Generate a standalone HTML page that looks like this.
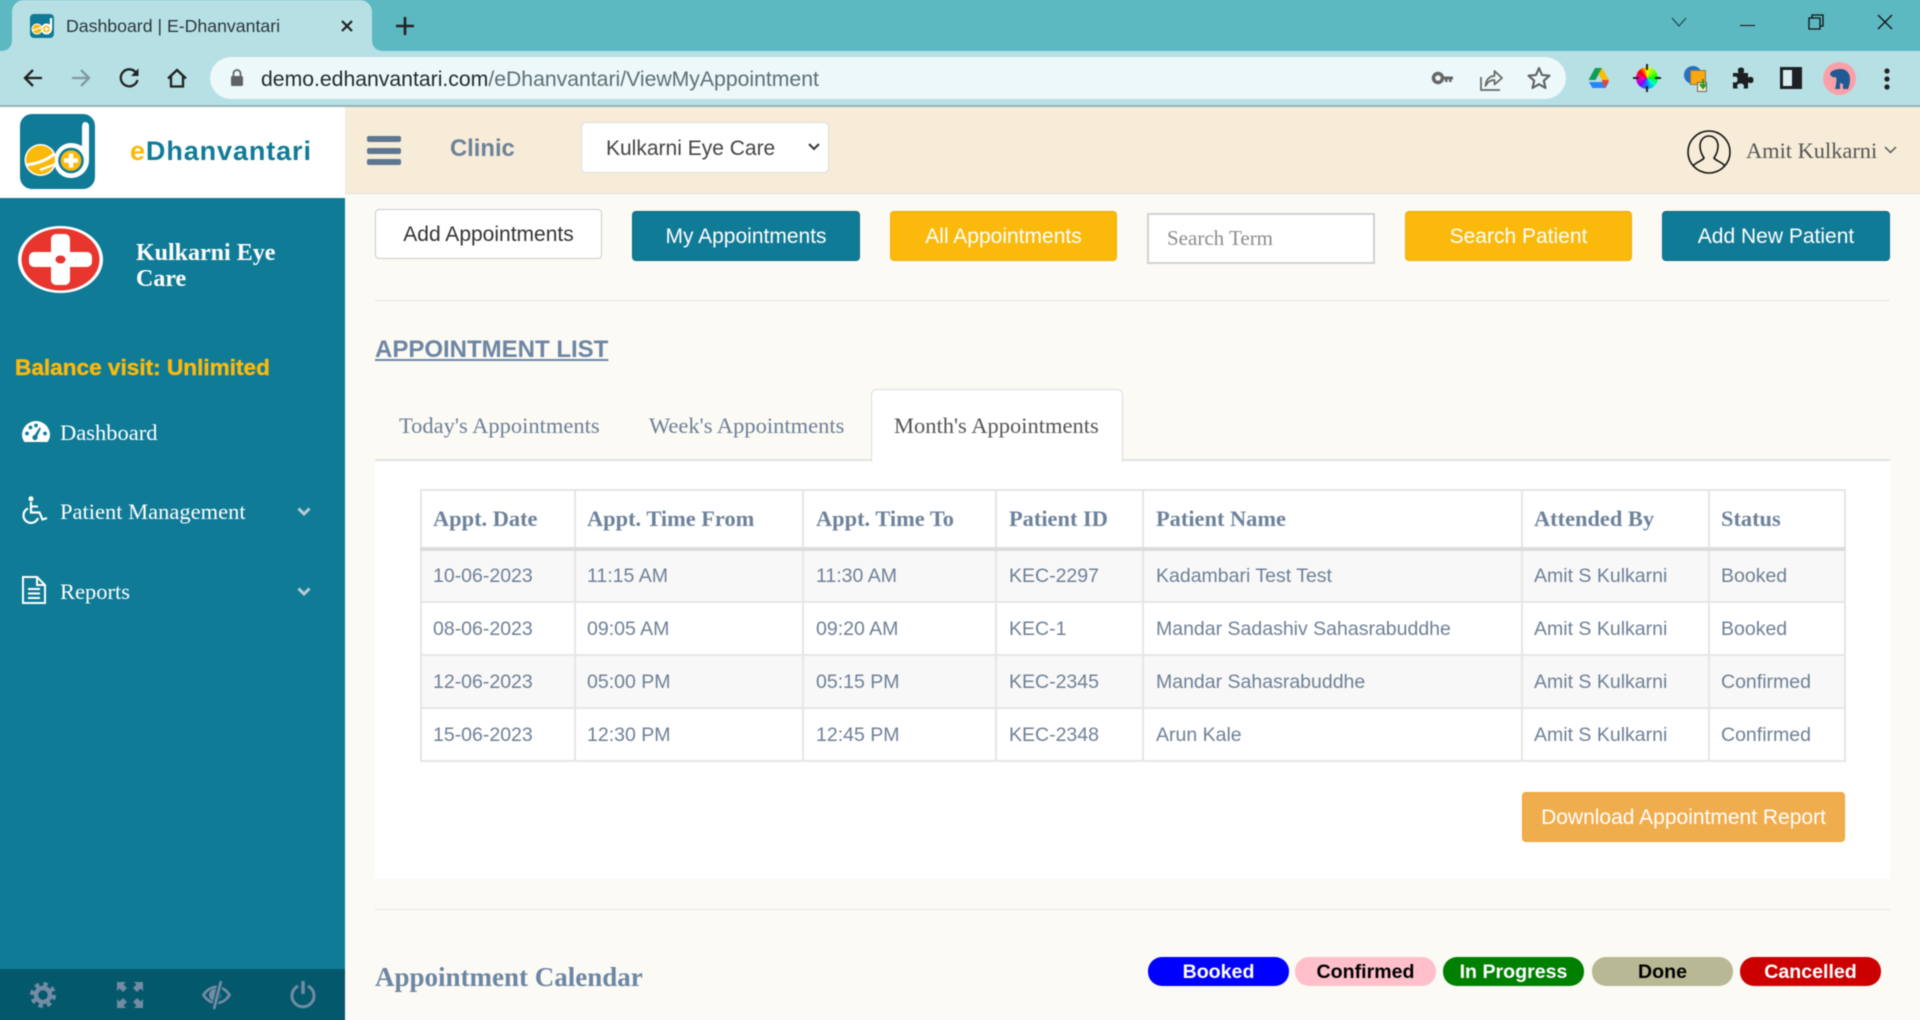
<!DOCTYPE html>
<html lang="en">
<head>
<meta charset="utf-8">
<title>Dashboard | E-Dhanvantari</title>
<style>
html,body{margin:0;padding:0;width:1920px;height:1020px;overflow:hidden;background:#fbfaf5;font-family:"Liberation Sans",sans-serif}
#w{position:absolute;left:0;top:0;width:1920px;height:1020px;overflow:hidden;contain:strict}
#r{position:absolute;left:-10px;top:-10px;width:1940px;height:1040px;overflow:hidden;filter:blur(.4px);background:#fbfaf5}
#i{position:absolute;left:10px;top:10px;width:1920px;height:1020px}
.a{position:absolute;white-space:nowrap;box-sizing:border-box}
.s{font-family:"Liberation Serif",serif}
svg{position:absolute;overflow:visible}
.btn{height:50px;line-height:50px;text-align:center;font-size:21px;color:#fff;border-radius:4px;border:1px solid}
.teal{background:#107b96;border-color:#0e6a82;border-top-color:#0c5f76}
.yel{background:#fbb90c;border-color:#f0b00c;border-top-color:#e3a70b}
.pill{top:957px;height:29px;line-height:31px;width:141px;border-radius:14px;text-align:center;font-weight:bold;font-size:19.6px}
.nav{font-family:"Liberation Serif",serif;font-size:22.5px;color:#fff;left:60px;line-height:26px}
table{position:absolute;left:420px;top:489px;width:1424px;border-collapse:collapse;table-layout:fixed;background:#fff}
th,td{border:2px solid #e6e6e6;padding:0 0 0 11px;text-align:left;box-sizing:border-box;white-space:nowrap}
th:nth-child(n+3):nth-child(-n+5),td:nth-child(n+3):nth-child(-n+5){padding-left:12px}
th{font-family:"Liberation Serif",serif;font-size:22.4px;font-weight:bold;color:#6d829b;height:59px;border-bottom:4px solid #dcdcdc}
td{font-size:19.5px;color:#6f8096;height:53px}
tr:nth-child(n+3) td{padding-top:1px}
tr.o td{background:#f8f8f8}
</style>
</head>
<body>
<div id="w"><div id="r"><div id="i">
<!-- browser chrome -->
<div class="a" style="left:-10px;top:-10px;width:1940px;height:61px;background:#5cb8c1"></div>
<div class="a" style="left:-10px;top:51px;width:1940px;height:54px;background:#b7e0e5"></div>
<div class="a" style="left:-10px;top:105px;width:1940px;height:2px;background:#94b6ba"></div>
<div class="a" style="left:12px;top:0;width:360px;height:51px;background:#b7e0e5;border-radius:12px 12px 0 0"></div>
<svg style="left:0;top:39px" width="12" height="12"><path d="M0 12C8 12 12 8 12 0V12Z" fill="#b7e0e5"/></svg>
<svg style="left:372px;top:39px" width="12" height="12"><path d="M12 12C4 12 0 8 0 0V12Z" fill="#b7e0e5"/></svg>
<svg style="left:30px;top:14px" width="24" height="24" viewBox="0 0 24 24"><rect width="24" height="24" rx="4" fill="#107b96"/><circle cx="16.500" cy="15" r="5.500" fill="#fff"/><circle cx="16.500" cy="15" r="3.500" fill="#fbb90c"/><path d="M21 4V15" stroke="#fff" stroke-width="2.300"/><path d="M16.500 12.500v5M14 15h5" stroke="#fff" stroke-width="1.300"/><circle cx="7" cy="15" r="5" fill="#fbb90c" stroke="#fff"/><path d="M2.500 16.500L11 13.500" stroke="#fff" stroke-width="1.200"/></svg>
<div class="a" style="left:66px;top:14px;line-height:24px;font-size:17.700px;color:#28383b">Dashboard | E-Dhanvantari</div>
<svg style="left:340px;top:19px" width="14" height="14"><path d="M2 2L12 12M12 2L2 12" stroke="#222" stroke-width="2.200"/></svg>
<svg style="left:396px;top:17px" width="18" height="18"><path d="M9 0V18M0 9H18" stroke="#222" stroke-width="2.600"/></svg>
<svg style="left:1671px;top:17px" width="16" height="10"><path d="M1 1L8 9L15 1" fill="none" stroke="#23474c" stroke-width="1.200"/></svg>
<div class="a" style="left:1740px;top:25px;width:15px;height:1px;background:#111"></div>
<svg style="left:1808px;top:14px" width="16" height="16"><path d="M4 4V1H15V12H12M1 4H12V15H1Z" fill="none" stroke="#111" stroke-width="1.300"/></svg>
<svg style="left:1877px;top:14px" width="16" height="16"><path d="M1 1L15 15M15 1L1 15" stroke="#111" stroke-width="1.300"/></svg>

<svg style="left:22px;top:67px" width="22" height="22"><path d="M20 11H3M11 3L3 11L11 19" fill="none" stroke="#222" stroke-width="2.300"/></svg>
<svg style="left:70px;top:67px" width="22" height="22"><path d="M2 11H19M11 3L19 11L11 19" fill="none" stroke="#7f9a9e" stroke-width="2.300"/></svg>
<svg style="left:118.500px;top:67px" width="22" height="22"><path d="M18.500 13A8.500 8.500 0 1 1 16.500 5" fill="none" stroke="#222" stroke-width="2.300"/><path d="M19.500 1.500V9H12Z" fill="#222"/></svg>
<svg style="left:166px;top:67px" width="22" height="22"><path d="M2 11.500L11 3L20 11.500M5 9.500V19.500H17V9.500" fill="none" stroke="#222" stroke-width="2.300"/></svg>
<div class="a" style="left:210px;top:57px;width:1356px;height:42px;background:#ecf8f9;border-radius:21px"></div>
<svg style="left:230px;top:68px" width="14" height="20"><path d="M3.500 8V5.500a3.500 3.500 0 0 1 7 0V8" fill="none" stroke="#5f6368" stroke-width="1.700"/><rect x="1" y="8" width="12" height="10" rx="1.500" fill="#5f6368"/></svg>
<div class="a" style="left:261px;top:67px;line-height:26px;font-size:21.200px;color:#1f2a2c">demo.edhanvantari.com<span style="color:#5c7074">/eDhanvantari/ViewMyAppointment</span></div>
<svg style="left:1431px;top:70px" width="24" height="16"><circle cx="7" cy="8" r="4.500" fill="none" stroke="#666" stroke-width="3.500"/><path d="M12 6.500H22V9.500H20.500V12H18V9.500H16.500V12H14V9.500H12Z" fill="#666"/></svg>
<svg style="left:1480px;top:66px" width="24" height="26"><path d="M1 11V24H20" fill="none" stroke="#666" stroke-width="1.700"/><path d="M5.500 20C6 13 10 10 14.500 10V5L22 12L14.500 18.500V14C10 14 7.500 16 5.500 20Z" fill="none" stroke="#666" stroke-width="1.700" stroke-linejoin="round"/></svg>
<svg style="left:1527px;top:66px" width="24" height="24" viewBox="0 0 24 24"><path d="M12 2L15 9L22.500 9.700L16.800 14.700L18.500 22L12 18.200L5.500 22L7.200 14.700L1.500 9.700L9 9Z" fill="none" stroke="#5f6368" stroke-width="2.100" stroke-linejoin="round"/></svg>
<svg style="left:1587px;top:67px" width="23" height="22" viewBox="0 0 23 22"><path d="M8 1H15L8.500 13H1.500Z" fill="#0f9d58"/><path d="M15 1L22 13H15L11.500 7Z" fill="#fbbc04"/><path d="M6 15H22L18.500 21H5.500L2 15Z" fill="#2684fc"/><path d="M15 13H22L18.500 21L15.500 16Z" fill="#ea4335"/></svg>
<div class="a" style="left:1636px;top:67px;width:22px;height:22px;border-radius:50%;background:conic-gradient(#ff0 0deg,#7f0 45deg,#0f0 90deg,#0fc 130deg,#08f 180deg,#80f 225deg,#f0a 270deg,#f00 315deg,#ff0 360deg)"></div>
<div class="a" style="left:1646px;top:64px;width:2px;height:6px;background:#222"></div>
<div class="a" style="left:1646px;top:86px;width:2px;height:6px;background:#222"></div>
<div class="a" style="left:1633px;top:77px;width:6px;height:2px;background:#222"></div>
<div class="a" style="left:1655px;top:77px;width:6px;height:2px;background:#222"></div>
<div class="a" style="left:1684px;top:66px;width:18px;height:18px;border-radius:50%;background:#2a6fc0"></div>
<div class="a" style="left:1690px;top:70px;width:16px;height:15px;background:#fba70f;border:1px solid #8a7a55"></div>
<div class="a" style="left:1697px;top:82px;width:10px;height:10px;background:#f3eccf;border:1px solid #666"></div>
<svg style="left:1699px;top:79px" width="8" height="11"><path d="M4 0V7M1 5L4 9L7 5" fill="none" stroke="#2b9a16" stroke-width="2"/></svg>
<svg style="left:1732px;top:67px" width="22" height="22" viewBox="0 0 22 22"><path d="M1 6H6.500C5 2 6.500 0.500 9 0.500S13 2 11.500 6H16V10.500C20 9 21.500 10.500 21.500 13S20 17 16 15.500V21.500H11.500C13 18 11 16.500 8.500 16.500S4 18 6 21.500H1V15C4.500 16.500 5.500 14.500 5.500 12.500S4.500 8.500 1 10Z" fill="#1c1e21"/></svg>
<div class="a" style="left:1780px;top:67px;width:22px;height:22px;border:3px solid #1e2124;border-right:10px solid #1e2124;background:#d8eef0"></div>
<div class="a" style="left:1823px;top:62px;width:33px;height:33px;border-radius:50%;background:#fba0a8"></div>
<svg style="left:1829px;top:68px" width="22" height="22" viewBox="0 0 22 22"><path d="M1 6C2 2 8 1 12 1C17 1 21 5 21 11C21 15 20 19 19 21H14V16L11 15V21H6C7 17 8 12 7 9C5 10 2 9 1 6Z" fill="#1f5a92"/></svg>
<svg style="left:1883px;top:67px" width="8" height="24"><circle cx="4" cy="4" r="2.600" fill="#222"/><circle cx="4" cy="12" r="2.600" fill="#222"/><circle cx="4" cy="20" r="2.600" fill="#222"/></svg>

<!-- header -->
<div class="a" style="left:-10px;top:107px;width:355px;height:91px;background:#fff"></div>
<div class="a" style="left:345px;top:107px;width:1585px;height:87px;background:#f7ecd8;border-bottom:1px solid #e2e0da"></div>
<svg style="left:20px;top:114px" width="75" height="75" viewBox="0 0 75 75"><rect width="75" height="75" rx="12" fill="#107b96"/><path d="M65 8C67.500 8 69 10 69 12V46C69 56 61 64 51 64C41 64 34 56 34 46.500C34 37 42 29 51 29C55 29 58 30 62 32V14C62 10 63 8 65 8Z" fill="#fff"/><circle cx="51" cy="46.500" r="12.800" fill="#107b96"/><circle cx="51" cy="46.500" r="10.300" fill="#fbb90c"/><path d="M51 39.500V53.500M44 46.500H58" stroke="#fff" stroke-width="4.500"/><circle cx="20.500" cy="46" r="16" fill="#fff"/><circle cx="20.500" cy="46" r="14.500" fill="#fbb90c"/><path d="M6 51C14 50 26 47 34 40" fill="none" stroke="#fff" stroke-width="3"/><path d="M20 56L36 50" stroke="#fff" stroke-width="2.500"/></svg>
<div class="a" style="left:130px;top:135px;line-height:32px;font-size:27px;font-weight:bold;letter-spacing:.9px;color:#107b96"><span style="color:#fbb90c">e</span>Dhanvantari</div>
<div class="a" style="left:367px;top:136px;width:34px;height:6px;background:#5f7690;border-radius:2px"></div>
<div class="a" style="left:367px;top:148px;width:34px;height:6px;background:#5f7690;border-radius:2px"></div>
<div class="a" style="left:367px;top:159px;width:34px;height:6px;background:#5f7690;border-radius:2px"></div>
<div class="a" style="left:450px;top:135px;line-height:28px;font-size:23.800px;font-weight:bold;color:#6d8199">Clinic</div>
<div class="a" style="left:581px;top:122px;width:248px;height:51px;background:#fff;border:1px solid #ddd;border-radius:5px"></div>
<div class="a" style="left:606px;top:136px;line-height:26px;font-size:21px;color:#444">Kulkarni Eye Care</div>
<svg style="left:808px;top:143px" width="12" height="8"><path d="M1 1L6 6L11 1" fill="none" stroke="#333" stroke-width="2"/></svg>
<svg style="left:1687px;top:130px" width="44" height="44" viewBox="0 0 44 44"><circle cx="22" cy="22" r="21" fill="none" stroke="#111" stroke-width="1.600"/><path d="M6 36C9 32 15 31 17 28C15 25 13 21 13 16C13 10 17 6 22 6C27 6 31 10 31 16C31 21 29 25 27 28C29 31 35 32 38 36" fill="none" stroke="#111" stroke-width="1.600"/></svg>
<div class="a s" style="left:1746px;top:138px;line-height:26px;font-size:22.400px;color:#555">Amit Kulkarni</div>
<svg style="left:1884px;top:146px" width="13" height="8"><path d="M1 1L6.500 6.500L12 1" fill="none" stroke="#555" stroke-width="1.500"/></svg>

<!-- sidebar -->
<div class="a" style="left:-10px;top:198px;width:355px;height:771px;background:#107b96"></div>
<div class="a" style="left:-10px;top:969px;width:355px;height:61px;background:#04586c"></div>
<svg style="left:18px;top:226px" width="85" height="67" viewBox="0 0 85 67"><ellipse cx="42.500" cy="33.500" rx="42.500" ry="33.500" fill="#fff"/><ellipse cx="42.500" cy="33.500" rx="39" ry="31" fill="#e8352e"/><rect x="11" y="26" width="63" height="15" rx="5" fill="#fff"/><rect x="33" y="8" width="19" height="51" rx="5" fill="#fff"/><ellipse cx="42.500" cy="33.500" rx="5" ry="4" fill="#e8352e"/></svg>
<div class="a s" style="left:136px;top:240px;font-size:24px;font-weight:bold;line-height:26px;color:#fff;white-space:normal;width:190px">Kulkarni Eye<br>Care</div>
<div class="a" style="left:15px;top:355px;line-height:26px;font-size:22.600px;font-weight:bold;color:#fbb90c;-webkit-text-stroke:.4px #fbb90c">Balance visit: Unlimited</div>

<svg style="left:22px;top:421px" width="28" height="21" viewBox="0 0 28 21"><path d="M2.500 21C0.800 18.500 0 16.500 0 14A14 14 0 0 1 28 14C28 16.500 27.200 18.500 25.500 21Z" fill="#fff"/><g fill="#107b96"><circle cx="5" cy="12.500" r="1.900"/><circle cx="8.500" cy="6.500" r="1.900"/><circle cx="14" cy="4.500" r="1.900"/><circle cx="23" cy="12.500" r="1.900"/><circle cx="13" cy="16.500" r="2.600"/><path d="M12 15L17.500 6.500L19 7.200L15 16Z"/></g></svg>
<div class="a nav" style="top:420px">Dashboard</div>
<svg style="left:22px;top:496px" width="26" height="28" viewBox="0 0 26 28"><circle cx="9" cy="2.800" r="2.500" fill="#fff"/><path d="M9 6V16.500H17.500L20.500 23.500L25 22" fill="none" stroke="#fff" stroke-width="2.200"/><path d="M9 10.500H16" stroke="#fff" stroke-width="2"/><path d="M6 12.500A7.500 7.500 0 1 0 16 22" fill="none" stroke="#fff" stroke-width="2.200"/></svg>
<div class="a nav" style="top:499px">Patient Management</div>
<svg style="left:297px;top:507px" width="14" height="10"><path d="M1.500 1.500L7 7L12.500 1.500" fill="none" stroke="#b6ccd5" stroke-width="3"/></svg>
<svg style="left:22px;top:576px" width="24" height="28" viewBox="0 0 24 28"><path d="M1 1H15L23 9V27H1Z" fill="none" stroke="#fff" stroke-width="2"/><path d="M15 1V9H23" fill="none" stroke="#fff" stroke-width="2"/><path d="M6 13H18M6 17.500H18M6 22H18" stroke="#fff" stroke-width="2"/></svg>
<div class="a nav" style="top:579px">Reports</div>
<svg style="left:297px;top:587px" width="14" height="10"><path d="M1.500 1.500L7 7L12.500 1.500" fill="none" stroke="#b6ccd5" stroke-width="3"/></svg>

<svg style="left:30px;top:982px" width="26" height="26" viewBox="0 0 26 26"><circle cx="13" cy="13" r="10.500" fill="none" stroke="#738ba3" stroke-width="5" stroke-dasharray="4.200 4.050"/><circle cx="13" cy="13" r="7" fill="none" stroke="#738ba3" stroke-width="4.500"/></svg>
<svg style="left:117px;top:982px" width="26" height="26" viewBox="0 0 26 26" fill="#738ba3"><path d="M0 0H9L6.500 2.500L10 6L6 10L2.500 6.500L0 9Z"/><path d="M26 0H17L19.500 2.500L16 6L20 10L23.500 6.500L26 9Z"/><path d="M0 26H9L6.500 23.500L10 20L6 16L2.500 19.500L0 17Z"/><path d="M26 26H17L19.500 23.500L16 20L20 16L23.500 19.500L26 17Z"/></svg>
<svg style="left:202px;top:981px" width="29" height="28" viewBox="0 0 29 28"><path d="M1.500 14C5 8.500 10 6 14.500 6C19 6 24 8.500 27.500 14C24 19.500 19 22 14.500 22C10 22 5 19.500 1.500 14Z" fill="none" stroke="#738ba3" stroke-width="2.800"/><circle cx="13" cy="14" r="6" fill="#738ba3"/><path d="M19 0L12 28" stroke="#04586c" stroke-width="5.500"/><path d="M19 0L12 28" stroke="#738ba3" stroke-width="2.800"/></svg>
<svg style="left:290px;top:981px" width="26" height="28" viewBox="0 0 26 28"><path d="M8 5A11 11 0 1 0 18 5" fill="none" stroke="#738ba3" stroke-width="3"/><path d="M13 0V13" stroke="#738ba3" stroke-width="3.500"/></svg>

<!-- action row -->
<div class="a btn" style="left:375px;top:209px;width:227px;background:#fff;border-color:#ccc;color:#333">Add Appointments</div>
<div class="a btn teal" style="left:632px;top:211px;width:228px">My Appointments</div>
<div class="a btn yel" style="left:890px;top:211px;width:227px">All Appointments</div>
<div class="a s" style="left:1147px;top:213px;width:228px;height:51px;background:#fff;border:2px solid #d2d2d2;padding-left:18px;line-height:47px;font-size:21px;color:#8d8d8d">Search Term</div>
<div class="a btn yel" style="left:1405px;top:211px;width:227px">Search Patient</div>
<div class="a btn teal" style="left:1662px;top:211px;width:228px">Add New Patient</div>
<div class="a" style="left:375px;top:300px;width:1515px;height:1px;background:#e6e5e1"></div>

<div class="a" style="left:375px;top:335px;line-height:30px;font-size:24px;font-weight:bold;color:#6d86a3;text-decoration:underline">APPOINTMENT LIST</div>

<!-- tabs -->
<div class="a" style="left:375px;top:460px;width:1515px;height:419px;background:#fff"></div>
<div class="a" style="left:375px;top:459px;width:1515px;height:2px;background:#e2e2df"></div>
<div class="a" style="left:871px;top:389px;width:252px;height:73px;background:#fff;border:1px solid #ddd;border-bottom:0;border-radius:6px 6px 0 0"></div>
<div class="a s" style="left:399px;top:412px;line-height:27px;font-size:22.500px;color:#6d7f95">Today's Appointments</div>
<div class="a s" style="left:649px;top:412px;line-height:27px;font-size:22.500px;color:#6d7f95">Week's Appointments</div>
<div class="a s" style="left:894px;top:412px;line-height:27px;font-size:22.500px;color:#555">Month's Appointments</div>

<!-- table -->
<table>
<colgroup><col style="width:154px"><col style="width:228px"><col style="width:193px"><col style="width:147px"><col style="width:379px"><col style="width:187px"><col style="width:136px"></colgroup>
<tr><th>Appt. Date</th><th>Appt. Time From</th><th>Appt. Time To</th><th>Patient ID</th><th>Patient Name</th><th>Attended By</th><th>Status</th></tr>
<tr class="o"><td>10-06-2023</td><td>11:15 AM</td><td>11:30 AM</td><td>KEC-2297</td><td>Kadambari Test Test</td><td>Amit S Kulkarni</td><td>Booked</td></tr>
<tr><td>08-06-2023</td><td>09:05 AM</td><td>09:20 AM</td><td>KEC-1</td><td>Mandar Sadashiv Sahasrabuddhe</td><td>Amit S Kulkarni</td><td>Booked</td></tr>
<tr class="o"><td>12-06-2023</td><td>05:00 PM</td><td>05:15 PM</td><td>KEC-2345</td><td>Mandar Sahasrabuddhe</td><td>Amit S Kulkarni</td><td>Confirmed</td></tr>
<tr><td>15-06-2023</td><td>12:30 PM</td><td>12:45 PM</td><td>KEC-2348</td><td>Arun Kale</td><td>Amit S Kulkarni</td><td>Confirmed</td></tr>
</table>

<div class="a btn" style="left:1522px;top:792px;width:323px;height:50px;background:#f0ad4e;border-color:#eea236">Download Appointment Report</div>
<div class="a" style="left:375px;top:909px;width:1515px;height:1px;background:#e6e5e1"></div>

<div class="a s" style="left:375px;top:962px;line-height:30px;font-size:27px;font-weight:bold;color:#6d86a3">Appointment Calendar</div>
<div class="a pill" style="left:1148px;background:#00f;color:#fff">Booked</div>
<div class="a pill" style="left:1295px;background:#ffc0cb;color:#000">Confirmed</div>
<div class="a pill" style="left:1443px;background:#008000;color:#fff">In Progress</div>
<div class="a pill" style="left:1592px;background:#b8b894;color:#000">Done</div>
<div class="a pill" style="left:1740px;background:#c00;color:#fff">Cancelled</div>
</div></div></div>
</body>
</html>
